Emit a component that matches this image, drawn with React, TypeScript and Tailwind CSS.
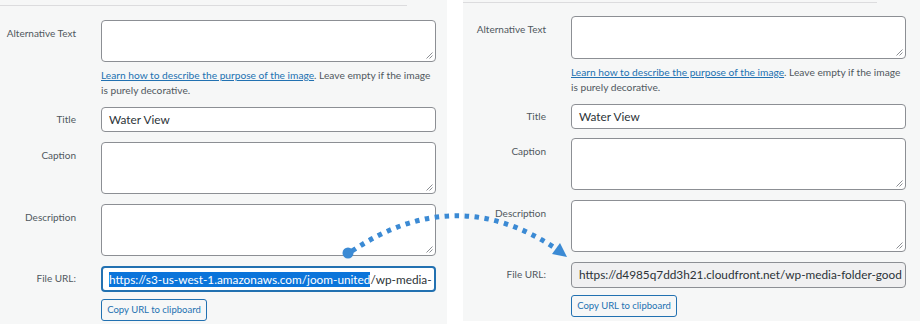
import React from "react";

const font = { fontFamily: 'Lato, "Noto Sans", Arial, sans-serif' };

function Resize() {
  return (
    <svg className="absolute right-[2px] bottom-[2px]" width="8" height="8" viewBox="0 0 8 8">
      <path d="M7.5 1.5 L1.5 7.5 M7.5 4.5 L4.5 7.5" stroke="#8c8f94" strokeWidth="1" fill="none" />
    </svg>
  );
}

function TextArea({ h }: { h: string }) {
  return (
    <div className={`relative w-[335px] ${h} rounded-[4px] border border-[#8c8f94] bg-white`}>
      <Resize />
    </div>
  );
}

function Row({ label, labelW, children, labelPt = "pt-[6px]" }: { label: string; labelW: string; children: React.ReactNode; labelPt?: string }) {
  return (
    <div className="flex gap-[25px]">
      <div className={`${labelW} shrink-0 whitespace-nowrap text-right text-[10px] leading-[14px] text-[#50575e] ${labelPt}`}>{label}</div>
      <div className="flex flex-col">{children}</div>
    </div>
  );
}

function Form({ left }: { left: boolean }) {
  const labelW = left ? "w-[76px]" : "w-[83px]";
  return (
    <div className={`flex flex-col ${left ? "pt-[5px]" : "pt-[2px]"}`} style={font}>
      <div className={`h-px ${left ? "w-[407px]" : "w-[414px]"} bg-[#dcdcde]`} />
      <div className={left ? "mt-[14px]" : "mt-[13px]"}>
        <Row label="Alternative Text" labelW={labelW} labelPt="pt-[6px]">
          <TextArea h={left ? "h-[42px]" : "h-[43px]"} />
          <p className="mt-[6px] w-[330px] text-[10.2px] leading-[15px] text-[#50575e]">
            <span className="text-[#2271b1] underline">Learn how to describe the purpose of the image</span>. Leave empty if the image is purely decorative.
          </p>
        </Row>
      </div>
      <div className="mt-[9px]">
        <Row label="Title" labelW={labelW} labelPt="pt-[5px]">
          <div className="flex h-[25px] w-[335px] items-center rounded-[4px] border border-[#8c8f94] bg-white px-[7px] text-[11.8px] text-[#2c3338]">
            Water View
          </div>
        </Row>
      </div>
      <div className={left ? "mt-[10px]" : "mt-[9px]"}>
        <Row label="Caption" labelW={labelW} labelPt="pt-[6px]">
          <TextArea h="h-[52px]" />
        </Row>
      </div>
      <div className="mt-[10px]">
        <Row label="Description" labelW={labelW} labelPt="pt-[6px]">
          <TextArea h="h-[52px]" />
        </Row>
      </div>
      <div className="mt-[10px]">
        <Row label="File URL:" labelW={labelW} labelPt="pt-[5px]">
          {left ? (
            <div className="flex h-[26px] w-[335px] items-center overflow-hidden whitespace-nowrap rounded-[4px] border-2 border-[#2271b1] bg-white pl-[6px] pr-[6px] text-[11.8px] text-[#2c3338]">
              <span className="bg-[#0a74da] text-white leading-[15px]">https://s3-us-west-1.amazonaws.com/joom-united</span>
              <span className="leading-[15px]">/wp-media-</span>
            </div>
          ) : (
            <div className="flex h-[26px] w-[335px] items-center overflow-hidden whitespace-nowrap rounded-[4px] border border-[#8c8f94] bg-[#f0f0f1] px-[7px] text-[11.8px] text-[#2c3338]">
              https://d4985q7dd3h21.cloudfront.net/wp-media-folder-good
            </div>
          )}
          <div className="mt-[7px]">
            <div className="flex h-[22px] w-[106px] items-center justify-center whitespace-nowrap rounded-[3px] border border-[#2271b1] bg-[#f6f7f7] text-[9.5px] text-[#2271b1]">
              Copy URL to clipboard
            </div>
          </div>
        </Row>
      </div>
    </div>
  );
}

export default function App() {
  return (
    <div className="relative flex h-[324px] w-[920px] overflow-hidden bg-white">
      <div className="h-[324px] w-[447px] shrink-0 overflow-hidden bg-[#f6f7f7]">
        <Form left />
      </div>
      <div className="w-[16px] shrink-0" />
      <div className="h-[321px] w-[457px] shrink-0 overflow-hidden bg-[#f6f7f7]">
        <Form left={false} />
      </div>
      <svg className="pointer-events-none absolute left-0 top-0" width="920" height="324" viewBox="0 0 920 324">
        <path d="M352 251 Q455 182 555 248" stroke="#3b8ad4" strokeWidth="5" strokeDasharray="4.5 5.5" fill="none" />
        <circle cx="348" cy="253" r="5.5" fill="#3b8ad4" />
        <polygon points="567,257 552,254 560,243" fill="#3b8ad4" />
      </svg>
    </div>
  );
}
